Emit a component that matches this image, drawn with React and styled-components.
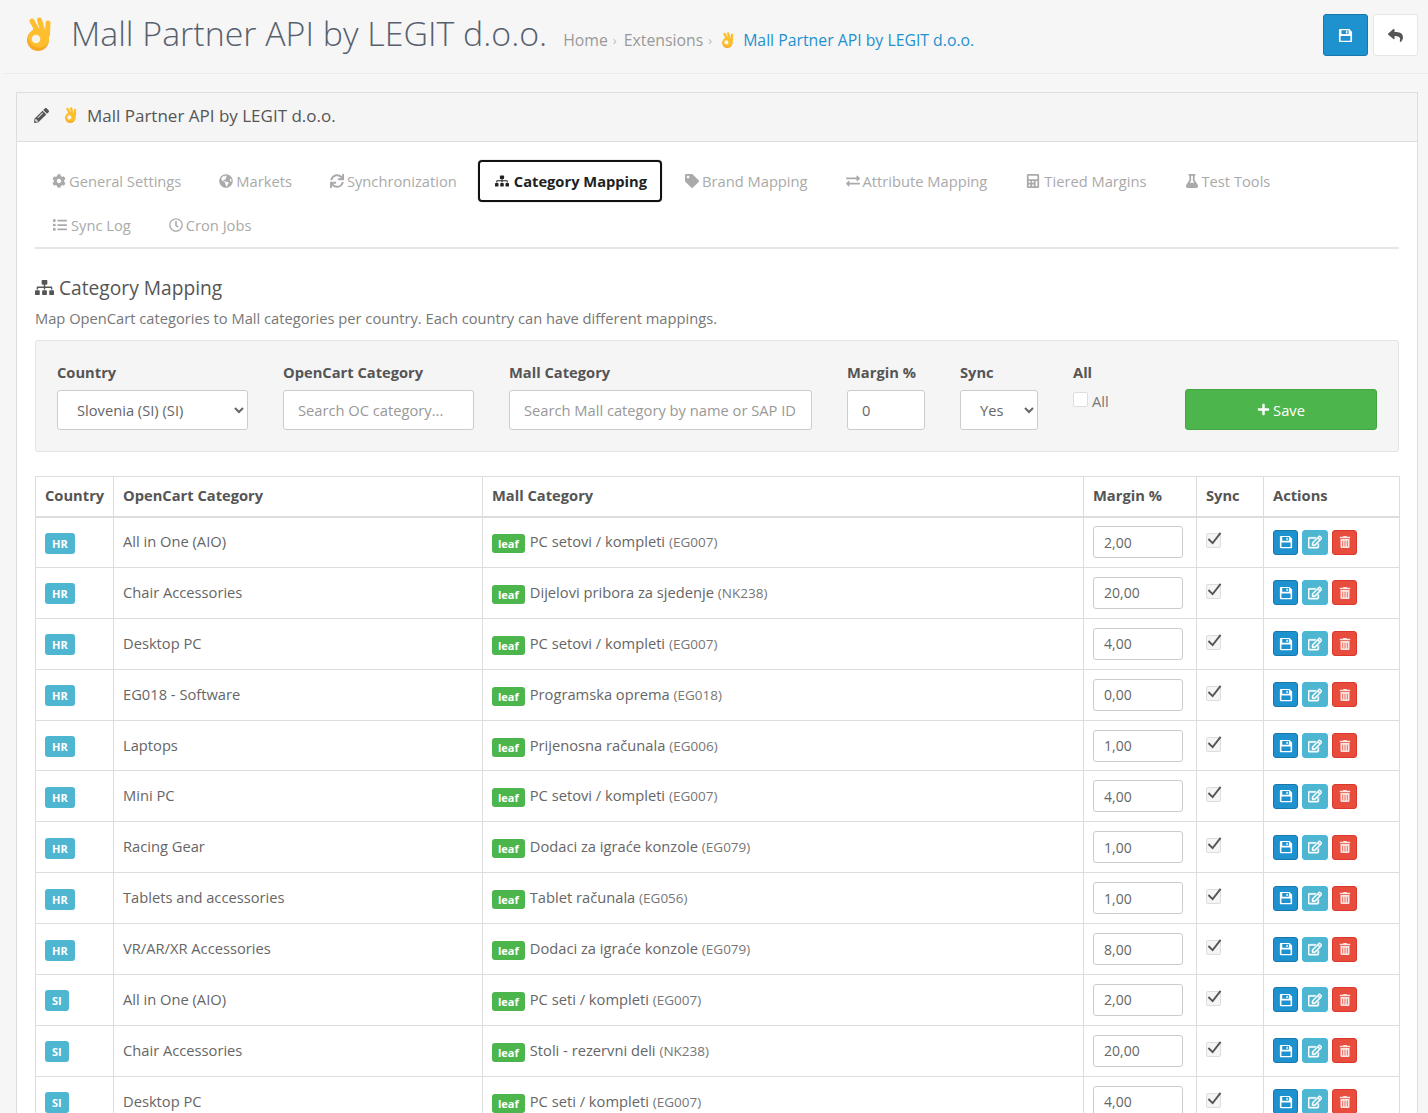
import styled, { createGlobalStyle } from 'styled-components';
import {
  FaCog, FaGlobeAmericas, FaSync, FaSitemap, FaTag, FaExchangeAlt, FaCalculator, FaFlask,
  FaList, FaRegClock, FaPencilAlt, FaReply, FaPlus, FaRegEdit, FaTrashAlt,
} from 'react-icons/fa';

const GlobalStyle = createGlobalStyle`
  html, body { margin: 0; padding: 0; background: #fff; }
  body {
    font-family: "Open Sans", "Liberation Sans", sans-serif;
    font-size: 14.7px;
    color: #666;
  }
  * { box-sizing: border-box; }
`;

const tabsTop = [
  { label: 'General Settings', icon: <FaCog /> },
  { label: 'Markets', icon: <FaGlobeAmericas /> },
  { label: 'Synchronization', icon: <FaSync /> },
  { label: 'Category Mapping', icon: <FaSitemap />, active: true },
  { label: 'Brand Mapping', icon: <FaTag /> },
  { label: 'Attribute Mapping', icon: <FaExchangeAlt /> },
  { label: 'Tiered Margins', icon: <FaCalculator />, wideIcon: true },
  { label: 'Test Tools', icon: <FaFlask /> },
  { label: 'Sync Log', icon: <FaList />, wideIcon: true },
  { label: 'Cron Jobs', icon: <FaRegClock /> },
];

const rows = [
  ['HR', 'All in One (AIO)', 'PC setovi / kompleti', 'EG007', '2,00'],
  ['HR', 'Chair Accessories', 'Dijelovi pribora za sjedenje', 'NK238', '20,00'],
  ['HR', 'Desktop PC', 'PC setovi / kompleti', 'EG007', '4,00'],
  ['HR', 'EG018 - Software', 'Programska oprema', 'EG018', '0,00'],
  ['HR', 'Laptops', 'Prijenosna računala', 'EG006', '1,00'],
  ['HR', 'Mini PC', 'PC setovi / kompleti', 'EG007', '4,00'],
  ['HR', 'Racing Gear', 'Dodaci za igraće konzole', 'EG079', '1,00'],
  ['HR', 'Tablets and accessories', 'Tablet računala', 'EG056', '1,00'],
  ['HR', 'VR/AR/XR Accessories', 'Dodaci za igraće konzole', 'EG079', '8,00'],
  ['SI', 'All in One (AIO)', 'PC seti / kompleti', 'EG007', '2,00'],
  ['SI', 'Chair Accessories', 'Stoli - rezervni deli', 'NK238', '20,00'],
  ['SI', 'Desktop PC', 'PC seti / kompleti', 'EG007', '4,00'],
];

// the 👌 emoji from the module name
function OkHand({ width, height }) {
  return (
    <svg width={width} height={height} viewBox="13 12 27 36">
      <g fill="none" stroke="#fdbf2d" strokeWidth="5" strokeLinecap="round">
        <path d="M18 16 L24 27" />
        <path d="M25.500 15 L28.500 25" />
        <path d="M34 18 L33.500 30" />
        <path d="M18 31 L22 25" />
      </g>
      <circle cx="24" cy="35" r="11" fill="#f9a825" />
      <path d="M14 33 a11 11 0 0 1 21 -3 v6 a11 11 0 0 1 -21 -3z" fill="#fdbf2d" />
      <circle cx="22" cy="34" r="4.300" fill="#f7f4ea" />
    </svg>
  );
}

function FloppyIcon() {
  return (
    <svg width="1em" height="1em" viewBox="0 0 16 16">
      <path
        fill="currentColor"
        fillRule="evenodd"
        d="M2 1h10l3 3v10a1 1 0 0 1-1 1H2a1 1 0 0 1-1-1V2a1 1 0 0 1 1-1zM3.700 2.300v4.200h7.600v-4.200zM8.500 3h1.500v2.800h-1.500zM2.800 8.600v5.100h10.400v-5.100z"
      />
    </svg>
  );
}

function App() {
  return (
    <Page>
      <GlobalStyle />
      <Header>
        <OkHand width={27} height={36} />
        <Title>Mall Partner API by LEGIT d.o.o.</Title>
        <Breadcrumb>
          <Crumb>Home</Crumb>
          <Sep>›</Sep>
          <Crumb>Extensions</Crumb>
          <Sep>›</Sep>
          <CrumbIcon><OkHand width={13} height={17} /></CrumbIcon>
          <CrumbLink>Mall Partner API by LEGIT d.o.o.</CrumbLink>
        </Breadcrumb>
        <HeaderActions>
          <HeaderButton $primary><FloppyIcon /></HeaderButton>
          <HeaderButton><FaReply /></HeaderButton>
        </HeaderActions>
      </Header>

      <Panel>
        <PanelHeading>
          <FaPencilAlt />
          <OkHand width={13} height={17} />
          <span>Mall Partner API by LEGIT d.o.o.</span>
        </PanelHeading>
        <PanelBody>
          <Tabs>
            {tabsTop.map((t) => (
              <Tab key={t.label} $active={t.active} $wideIcon={t.wideIcon}>
                {t.icon}
                {t.label}
              </Tab>
            ))}
          </Tabs>

          <SectionTitle><FaSitemap />Category Mapping</SectionTitle>
          <SectionHelp>Map OpenCart categories to Mall categories per country. Each country can have different mappings.</SectionHelp>

          <FilterWell>
            <Field>
              <FieldLabel>Country</FieldLabel>
              <SelectBox defaultValue="SI">
                <option value="SI">Slovenia (SI) (SI)</option>
              </SelectBox>
            </Field>
            <Field>
              <FieldLabel>OpenCart Category</FieldLabel>
              <TextBox placeholder="Search OC category..." />
            </Field>
            <Field>
              <FieldLabel>Mall Category</FieldLabel>
              <TextBox placeholder="Search Mall category by name or SAP ID" />
            </Field>
            <Field>
              <FieldLabel>Margin %</FieldLabel>
              <TextBox defaultValue="0" />
            </Field>
            <Field>
              <FieldLabel>Sync</FieldLabel>
              <SelectBox defaultValue="Yes">
                <option>Yes</option>
              </SelectBox>
            </Field>
            <Field>
              <FieldLabel>All</FieldLabel>
              <AllRow><CheckBox />All</AllRow>
            </Field>
            <SaveButton><FaPlus />Save</SaveButton>
          </FilterWell>

          <MapTable>
            <colgroup>
              <col width="78" />
              <col width="369" />
              <col width="601" />
              <col width="113" />
              <col width="67" />
              <col width="136" />
            </colgroup>
            <thead>
              <tr>
                <Th>Country</Th>
                <Th>OpenCart Category</Th>
                <Th>Mall Category</Th>
                <Th>Margin %</Th>
                <Th>Sync</Th>
                <Th>Actions</Th>
              </tr>
            </thead>
            <tbody>
              {rows.map(([country, cat, mall, code, margin], i) => (
                <tr key={i}>
                  <Td><CountryBadge>{country}</CountryBadge></Td>
                  <Td $lift>{cat}</Td>
                  <Td>
                    <LeafBadge>leaf</LeafBadge>
                    {mall} <Code>({code})</Code>
                  </Td>
                  <Td><MarginInput defaultValue={margin} /></Td>
                  <Td><CheckBox $checked><CheckMark viewBox="0 0 16 16"><path d="M1.500 8.500 L6 13 L14.500 2" /></CheckMark></CheckBox></Td>
                  <Td>
                    <ActionRow>
                      <ActionButton $bg="#1e91cf" $border="#1978ab"><FloppyIcon /></ActionButton>
                      <ActionButton $bg="#4fb6d2" $border="#46b8da" $wide><EditGlyph /></ActionButton>
                      <ActionButton $bg="#e74c3c" $border="#d9382a"><TrashGlyph /></ActionButton>
                    </ActionRow>
                  </Td>
                </tr>
              ))}
            </tbody>
          </MapTable>
        </PanelBody>
      </Panel>
    </Page>
  );
}

export default App;

const Page = styled.div`
  height: 1113px;
  overflow: hidden;
  background: #f6f6f6;
`;

const Header = styled.header`
  display: flex;
  align-items: center;
  height: 74px;
  margin-left: 4px;
  padding: 0 10px 3px 23px;
  border-bottom: 1px solid #ececec;
`;

const Title = styled.h1`
  margin: 0 16px 4px 17px;
  font-size: 33.900px;
  font-weight: 300;
  color: #56606e;
  white-space: nowrap;
`;

const Breadcrumb = styled.nav`
  display: flex;
  align-items: center;
  gap: 5px;
  margin-top: 10px;
  font-size: 15.800px;
  color: #999;
`;

const Crumb = styled.span``;

const Sep = styled.span`
  color: #bbb;
  font-size: 13px;
  margin-right: 2px;
`;

const CrumbIcon = styled.span`
  display: flex;
  margin-left: 3px;
`;

const CrumbLink = styled.span`
  color: #1e91cf;
  margin-left: 3px;
`;

const HeaderActions = styled.div`
  display: flex;
  gap: 5px;
  margin-left: auto;
`;

const HeaderButton = styled.button`
  display: flex;
  align-items: center;
  justify-content: center;
  width: 45px;
  height: 42px;
  padding: 0;
  font-size: 15px;
  border-radius: 3px;
  border: 1px solid ${(p) => (p.$primary ? '#1978ab' : '#e6e6e6')};
  background: ${(p) => (p.$primary ? '#1e91cf' : '#fff')};
  color: ${(p) => (p.$primary ? '#fff' : '#555')};
`;

const Panel = styled.section`
  margin: 18px 10px 0 16px;
  background: #fff;
  border: 1px solid #ddd;
`;

const PanelHeading = styled.div`
  display: flex;
  align-items: center;
  height: 49px;
  padding: 0 17px 4px;
  background: #f5f5f5;
  border-bottom: 1px solid #ddd;
  font-size: 17px;
  color: #555;

  > svg:first-child {
    font-size: 15px;
    margin-right: 16px;
  }
  > span {
    margin-left: 9px;
  }
`;

const PanelBody = styled.div`
  padding: 18px 18px 0;
`;

const Tabs = styled.nav`
  display: flex;
  flex-wrap: wrap;
  row-gap: 1px;
  column-gap: 4px;
  min-height: 89px;
  border-bottom: 2px solid #e6e6e6;
`;

const Tab = styled.a`
  display: flex;
  align-items: center;
  gap: 3px;
  height: 42px;
  padding: 0 17px;
  font-weight: ${(p) => (p.$active ? 700 : 400)};
  color: ${(p) => (p.$active ? '#222' : '#aaa')};
  border-radius: 4px;
  background: #fff;
  ${(p) => p.$active && `
    gap: 5px;
    margin-right: 2px;
    border: 2px solid #111;
    padding: 0 13px 0 15px;
    box-shadow: 0 0 0 1px #eee;
  `}

  svg {
    font-size: 14px;
    ${(p) => p.$wideIcon && 'width: 16px;'}
  }
`;

const SectionTitle = styled.h3`
  display: flex;
  align-items: center;
  gap: 5px;
  margin: 25px 0 0;
  font-size: 19.200px;
  font-weight: 400;
  color: #555;

  svg {
    font-size: 19px;
  }
`;

const SectionHelp = styled.p`
  margin: 7px 0 12px;
  color: #777;
`;

const FilterWell = styled.div`
  display: grid;
  grid-template-columns: 191px 191px 303px 78px 78px 77px 192px;
  column-gap: 35px;
  align-items: end;
  height: 112px;
  padding: 21px 21px 23px;
  background: #f5f5f5;
  border: 1px solid #e3e3e3;
  border-radius: 3px;
`;

const Field = styled.div`
  display: flex;
  flex-direction: column;
  gap: 8px;
`;

const FieldLabel = styled.label`
  font-weight: 700;
  color: #555;
`;

const inputBase = `
  width: 100%;
  height: 40px;
  border: 1px solid #ccc;
  border-radius: 3px;
  background: #fff;
  color: #666;
  font-family: inherit;
  font-size: 14.700px;
`;

const SelectBox = styled.select`
  ${inputBase}
  padding-left: 15px;
`;

const TextBox = styled.input`
  ${inputBase}
  padding: 0 14px;

  &::placeholder {
    color: #999;
  }
`;

const AllRow = styled.div`
  display: flex;
  align-items: flex-start;
  gap: 4px;
  height: 40px;
  padding-top: 1px;
  color: #777;

  > span {
    margin-top: 1px;
  }
`;

const CheckBox = styled.span`
  position: relative;
  display: inline-block;
  width: 15px;
  height: 15px;
  background: ${(p) => (p.$checked ? '#f5f5f5' : '#fff')};
  border: 1px solid #ddd;
  border-radius: 2px;
`;

const CheckMark = styled.svg`
  position: absolute;
  left: 0;
  top: -3px;
  width: 15px;
  height: 15px;
  fill: none;
  stroke: #555;
  stroke-width: 2;
`;

const SaveButton = styled.button`
  display: flex;
  align-items: center;
  justify-content: center;
  gap: 3px;
  height: 41px;
  background: #4cb64c;
  border: 1px solid #43a543;
  border-radius: 3px;
  color: #fff;
  font-family: inherit;
  font-size: 14.700px;

  svg {
    font-size: 13px;
  }
`;

const MapTable = styled.table`
  width: 1365px;
  margin-top: 24px;
  table-layout: fixed;
  border-collapse: collapse;
  background: #fff;
`;

const Th = styled.th`
  height: 40px;
  padding: 0 9px 2px;
  text-align: left;
  font-weight: 700;
  color: #555;
  border: 1px solid #ddd;
  border-bottom-width: 2px;
`;

const Td = styled.td`
  height: 50.900px;
  padding: 0 9px ${(p) => (p.$lift ? 2 : 0)}px;
  border: 1px solid #ddd;
  color: #666;
`;

const CountryBadge = styled.span`
  display: inline-block;
  padding: 3px 7px;
  margin-top: 2px;
  font-size: 11px;
  font-weight: 700;
  color: #fff;
  background: #4fb6d2;
  border-radius: 3px;
`;

const LeafBadge = styled.span`
  display: inline-block;
  padding: 2px 6px;
  margin-right: 5px;
  font-size: 11px;
  font-weight: 700;
  color: #fff;
  background: #4cb64c;
  border-radius: 3px;
  vertical-align: -1px;
`;

const Code = styled.span`
  font-size: 13.500px;
  color: #777;
`;

const MarginInput = styled.input`
  width: 90px;
  height: 32px;
  padding: 0 10px;
  border: 1px solid #ccc;
  border-radius: 3px;
  color: #666;
  font-family: inherit;
  font-size: 14px;
`;

const ActionRow = styled.div`
  display: flex;
  gap: 4px;
`;

const ActionButton = styled.button`
  display: flex;
  align-items: center;
  justify-content: center;
  width: ${(p) => (p.$wide ? 26 : 25)}px;
  height: 25px;
  padding: 0;
  color: #fff;
  font-size: 14px;
  background: ${(p) => p.$bg};
  border: 1px solid ${(p) => p.$border};
  border-radius: 3px;
`;

const EditGlyph = styled(FaRegEdit)`
  stroke: currentColor;
  stroke-width: 20;
`;

const TrashGlyph = styled(FaTrashAlt)`
  font-size: 12px;
  opacity: 0.85;
`;
